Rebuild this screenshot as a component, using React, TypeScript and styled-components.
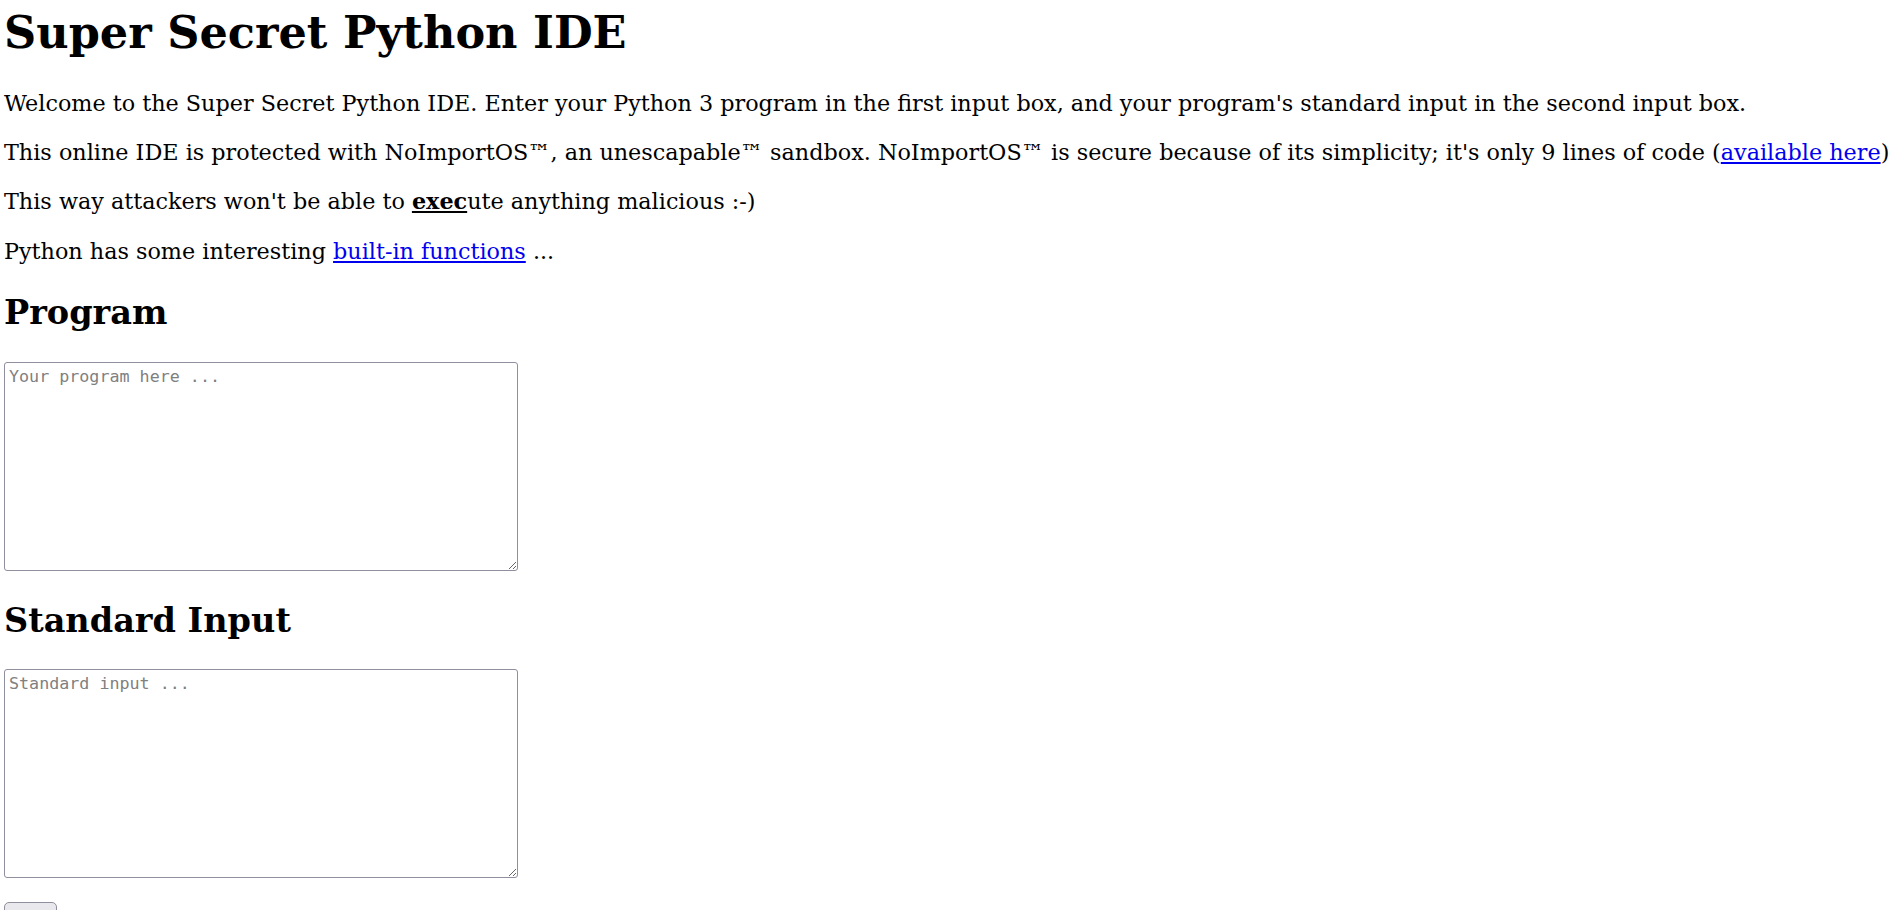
import styled, { createGlobalStyle } from "styled-components";

const GlobalStyle = createGlobalStyle`
  html, body {
    margin: 0;
    padding: 0;
    background: #ffffff;
  }
  body {
    font-family: "DejaVu Serif", serif;
    color: #000000;
  }
`;

const Page = styled.main`
  display: flex;
  flex-direction: column;
  align-items: flex-start;
  padding: 0 4px;
`;

const Title = styled.h1`
  font-size: 44.6px;
  font-weight: bold;
  line-height: 52px;
  margin: 7px 0 30.5px;
`;

const Para = styled.p`
  font-size: 22.3px;
  line-height: 27.1px;
  margin: 0 0 22.4px;
  white-space: nowrap;
  &:last-of-type {
    margin-bottom: 28.3px;
  }
`;

const Heading = styled.h2`
  font-size: 33.5px;
  font-weight: bold;
  line-height: 40px;
  margin: 0 0 28.8px;
`;

const Link = styled.a`
  color: #0000ee;
  text-decoration: underline;
`;

const Exec = styled.span`
  font-weight: bold;
  text-decoration: underline;
`;

const Editor = styled.textarea`
  box-sizing: border-box;
  width: 514px;
  height: 209px;
  margin: 0 0 29.5px;
  padding: 3px 4px;
  border: 1px solid #8f8f9d;
  border-radius: 3px;
  font-family: "DejaVu Sans Mono", monospace;
  font-size: 16.7px;
  line-height: 20px;
  resize: both;
  &::placeholder {
    color: #808080;
  }
  &:last-of-type {
    margin-bottom: 24px;
  }
`;

const RunButton = styled.button`
  box-sizing: border-box;
  width: 53px;
  height: 34px;
  padding: 1px 8px;
  border: 1px solid #8f8f9d;
  border-radius: 5px;
  background: #e9e9ed;
  font-family: "DejaVu Sans", sans-serif;
  font-size: 18px;
  color: #000;
`;

export default function App() {
  return (
    <>
      <GlobalStyle />
      <Page>
        <Title>Super Secret Python IDE</Title>
        <Para>
          Welcome to the Super Secret Python IDE. Enter your Python 3 program in
          the first input box, and your program's standard input in the second
          input box.
        </Para>
        <Para>
          This online IDE is protected with NoImportOS™, an unescapable™
          sandbox. NoImportOS™ is secure because of its simplicity; it's only 9
          lines of code (<Link href="#">available here</Link>)
        </Para>
        <Para>
          This way attackers won't be able to <Exec>exec</Exec>ute anything
          malicious :-)
        </Para>
        <Para>
          Python has some interesting <Link href="#">built-in functions</Link>{" "}
          ...
        </Para>
        <Heading>Program</Heading>
        <Editor placeholder="Your program here ..." />
        <Heading>Standard Input</Heading>
        <Editor placeholder="Standard input ..." />
        <RunButton type="button">Run</RunButton>
      </Page>
    </>
  );
}
